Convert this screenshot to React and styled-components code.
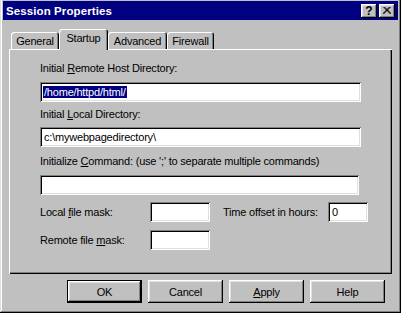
import React from "react";
import styled, { createGlobalStyle } from "styled-components";

const GlobalStyle = createGlobalStyle`
  body {
    margin: 0;
    background: #c0c0c0;
    font-family: "Liberation Sans", Arial, sans-serif;
  }
`;

const raised = `
  box-shadow: inset -1px -1px #000, inset 1px 1px #fff,
    inset -2px -2px #808080, inset 2px 2px #dfdfdf;
`;

const Window = styled.div`
  width: 401px;
  height: 313px;
  box-sizing: border-box;
  background: #c0c0c0;
  padding: 1px 3px 3px 3px;
  box-shadow: inset -1px -1px #000, inset 1px 0 #dfdfdf,
    inset -2px -2px #808080, inset 2px 0 #fff;
  display: flex;
  flex-direction: column;
`;

const TitleBar = styled.div`
  height: 19px;
  background: #000080;
  display: flex;
  align-items: center;
  padding: 0 3px 0 3px;
`;

const Title = styled.span`
  flex: 1;
  color: #fff;
  font-weight: bold;
  font-size: 11.5px;
  letter-spacing: 0.1px;
`;

const CaptionButton = styled.button`
  width: 16px;
  height: 14px;
  padding: 0;
  border: none;
  background: #c0c0c0;
  ${raised}
  display: flex;
  align-items: center;
  justify-content: center;
  font-family: "Liberation Sans", Arial, sans-serif;
  font-weight: bold;
  font-size: 12px;
  line-height: 1;
  color: #000;
  margin-left: ${(p) => p.$gap || 0}px;
`;

const Body = styled.div`
  padding: 8px 6px 0 6px;
`;

const TabRow = styled.div`
  display: flex;
  align-items: flex-end;
  padding-left: 2px;
  height: 21px;
  position: relative;
  z-index: 1;
`;

const Tab = styled.div`
  width: ${(p) => p.$w}px;
  height: ${(p) => (p.$active ? 21 : 17)}px;
  margin-bottom: ${(p) => (p.$active ? -1 : 0)}px;
  box-sizing: border-box;
  background: #c0c0c0;
  border-radius: 3px 3px 0 0;
  box-shadow: inset 1px 1px #fff, inset -1px 0 #000, inset -2px 0 #808080;
  display: flex;
  justify-content: center;
  align-items: ${(p) => (p.$active ? "flex-start" : "center")};
  padding-top: ${(p) => (p.$active ? 3 : 1)}px;
  font-size: 11px;
  letter-spacing: -0.2px;
  color: #000;
`;

const Panel = styled.div`
  height: 225px;
  box-sizing: border-box;
  padding: 13px 0 0 31px;
  box-shadow: inset 1px 1px #fff, inset -1px -1px #000,
    inset -2px -2px #808080;
  display: flex;
  flex-direction: column;
`;

const Label = styled.div`
  font-size: 11px;
  line-height: 13px;
  letter-spacing: -0.2px;
  color: #000;
  margin-top: ${(p) => p.$mt || 0}px;
  width: ${(p) => (p.$w ? `${p.$w}px` : "auto")};
  flex-shrink: 0;
`;

const Field = styled.div`
  width: ${(p) => p.$w}px;
  height: 20px;
  box-sizing: border-box;
  background: #fff;
  box-shadow: inset 1px 1px #808080, inset -1px -1px #fff,
    inset 2px 2px #000, inset -2px -2px #dfdfdf;
  margin-top: ${(p) => p.$mt || 0}px;
  padding: 0 0 0 4px;
  display: flex;
  align-items: center;
  font-size: 11px;
  letter-spacing: -0.2px;
  color: #000;
  flex-shrink: 0;
`;

const Selected = styled.span`
  background: #000080;
  color: #fff;
  margin-left: -1px;
  padding: 0 1px;
  line-height: 12px;
`;

const Row = styled.div`
  display: flex;
  align-items: center;
  margin-top: ${(p) => p.$mt}px;
`;

const ButtonRow = styled.div`
  display: flex;
  justify-content: flex-end;
  gap: 6px;
  padding: 6px 7px 0 0;
`;

const Button = styled.button`
  width: 75px;
  height: 23px;
  padding: 0;
  border: none;
  background: #c0c0c0;
  font-family: "Liberation Sans", Arial, sans-serif;
  font-size: 11px;
  letter-spacing: -0.2px;
  color: #000;
  ${(p) =>
    p.$default
      ? `box-shadow: inset 0 0 0 1px #000, inset -2px -2px #000, inset 2px 2px #fff,
    inset -3px -3px #808080, inset 3px 3px #dfdfdf;`
      : raised}
`;

export default function App() {
  return (
    <>
      <GlobalStyle />
      <Window>
        <TitleBar>
          <Title>Session Properties</Title>
          <CaptionButton>?</CaptionButton>
          <CaptionButton $gap={2}>
            <svg width="8" height="7" viewBox="0 0 8 7">
              <path
                d="M0.5 0 L7.5 7 M1.5 0 L8.5 7 M7.5 0 L0.5 7 M6.5 0 L-0.5 7"
                stroke="#000"
                strokeWidth="1"
              />
            </svg>
          </CaptionButton>
        </TitleBar>
        <Body>
          <TabRow>
            <Tab $w={48}>General</Tab>
            <Tab $w={49} $active>
              Startup
            </Tab>
            <Tab $w={59}>Advanced</Tab>
            <Tab $w={47}>Firewall</Tab>
          </TabRow>
          <Panel>
            <Label>
              Initial <u>R</u>emote Host Directory:
            </Label>
            <Field $w={321} $mt={7}>
              <Selected>/home/httpd/html/</Selected>
            </Field>
            <Label $mt={6}>
              Initial <u>L</u>ocal Directory:
            </Label>
            <Field $w={321} $mt={6}>
              c:\mywebpagedirectory\
            </Field>
            <Label $mt={8}>
              Initialize <u>C</u>ommand: (use ';' to separate multiple commands)
            </Label>
            <Field $w={319} $mt={7} />
            <Row $mt={7}>
              <Label $w={110}>
                Local <u>f</u>ile mask:
              </Label>
              <Field $w={60} />
              <Label $w={105} style={{ marginLeft: 13 }}>
                Time offset in hours:
              </Label>
              <Field $w={40}>0</Field>
            </Row>
            <Row $mt={8}>
              <Label $w={110}>
                Remote file <u>m</u>ask:
              </Label>
              <Field $w={60} />
            </Row>
          </Panel>
          <ButtonRow>
            <Button $default>OK</Button>
            <Button>Cancel</Button>
            <Button>
              <u>A</u>pply
            </Button>
            <Button>Help</Button>
          </ButtonRow>
        </Body>
      </Window>
    </>
  );
}
